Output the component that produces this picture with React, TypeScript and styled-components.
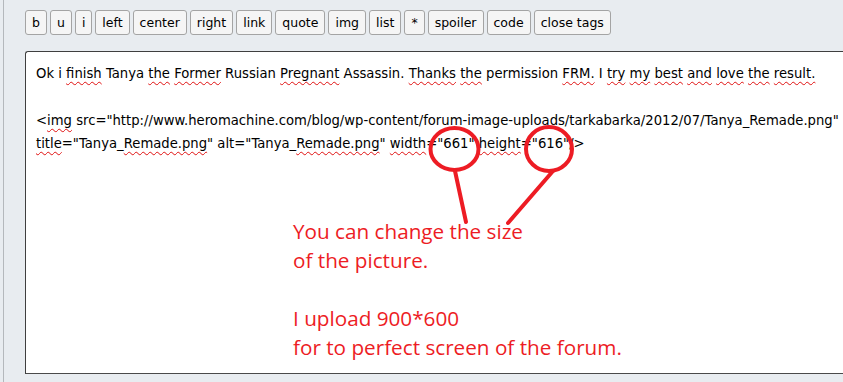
import React from "react";
import styled, { createGlobalStyle } from "styled-components";

const GlobalStyle = createGlobalStyle`
  html, body {
    margin: 0;
    padding: 0;
    background: #e8ecf0;
    overflow: hidden;
  }
`;

const Page = styled.div`
  position: relative;
  width: 843px;
  height: 382px;
  overflow: hidden;
  background: #e8ecf0;
`;

const Frame = styled.div`
  margin-left: 3px;
  height: 100%;
  border-left: 1px solid #b4b8bc;
  padding: 10px 0 0 21px;
  box-sizing: border-box;
  display: flex;
  flex-direction: column;
  gap: 16px;
`;

const Toolbar = styled.div`
  display: flex;
  gap: 3px;
`;

const TagButton = styled.button`
  height: 25px;
  padding: 0 6px;
  border: 1px solid #a4a4a4;
  border-radius: 3px;
  background: #f5f5f5;
  color: #000;
  font-family: "DejaVu Sans", Verdana, sans-serif;
  font-size: 12.5px;
  line-height: 23px;
  cursor: pointer;
`;

const Editor = styled.div`
  width: 860px;
  height: 323px;
  box-sizing: border-box;
  background: #fff;
  border-top: 1px solid #3f3f3f;
  border-left: 1px solid #3f3f3f;
  border-bottom: 1px solid #4a4a4a;
  border-top-left-radius: 3px;
  padding: 9.5px 0 0 10px;
  font-family: "DejaVu Sans", Verdana, sans-serif;
  font-size: 13.2px;
  line-height: 23.5px;
  color: #000;
`;

const Line = styled.div`
  white-space: pre;
  min-height: 23.5px;
`;

const Typo = styled.span`
  text-decoration: underline wavy #e01010;
  text-decoration-thickness: 1px;
  text-underline-offset: 3px;
  text-decoration-skip-ink: none;
`;

const Marks = styled.svg`
  position: absolute;
  left: 0;
  top: 0;
  pointer-events: none;
`;

const Note = styled.div`
  position: absolute;
  left: 293px;
  top: 217px;
  color: #ed1c24;
  font-family: "Open Sans", "Noto Sans", sans-serif;
  font-size: 20.7px;
  line-height: 29px;
  white-space: pre;
`;

const buttons = ["b", "u", "i", "left", "center", "right", "link", "quote", "img", "list", "*", "spoiler", "code", "close tags"];

const renderWords = (text: string, typos: string[]) =>
  text.split(/(\s+)/).map((w, i) => {
    const bare = w.replace(/[.]/g, "");
    return typos.includes(bare) ? <Typo key={i}>{w}</Typo> : <React.Fragment key={i}>{w}</React.Fragment>;
  });

export default function App() {
  return (
    <Page>
      <GlobalStyle />
      <Frame>
        <Toolbar>
          {buttons.map((b) => (
            <TagButton key={b}>{b}</TagButton>
          ))}
        </Toolbar>
        <Editor>
          <Line>
            {renderWords(
              "Ok i finish Tanya the Former Russian Pregnant Assassin. Thanks the permission FRM. I try my best and love the result.",
              ["finish", "the", "Former", "Pregnant", "Thanks", "FRM", "try", "my", "best", "and", "love", "result"]
            )}
          </Line>
          <Line />
          <Line>
            {"<"}
            <Typo>img</Typo>
            {' src="http://www.heromachine.com/blog/wp-content/forum-image-uploads/tarkabarka/2012/07/Tanya_Remade.png"'}
          </Line>
          <Line>
            <Typo>title</Typo>
            {'="Tanya_'}
            <Typo>Remade.png</Typo>
            {'" alt="Tanya_'}
            <Typo>Remade.png</Typo>
            {'" '}
            <Typo>width</Typo>
            {'="661" '}
            <Typo>height</Typo>
            {'="616"/>'}
          </Line>
        </Editor>
      </Frame>
      <Marks width="843" height="382" viewBox="0 0 843 382">
        <g fill="none" stroke="#ed1c24" strokeWidth="4" strokeLinecap="round">
          <ellipse cx="454.5" cy="149" rx="24" ry="21" />
          <ellipse cx="549" cy="149" rx="23" ry="22" />
          <line x1="455" y1="171" x2="466" y2="222" />
          <line x1="553" y1="171" x2="508" y2="223" />
        </g>
      </Marks>
      <Note>{"You can change the size\nof the picture.\n\nI upload 900*600\nfor to perfect screen of the forum."}</Note>
    </Page>
  );
}
